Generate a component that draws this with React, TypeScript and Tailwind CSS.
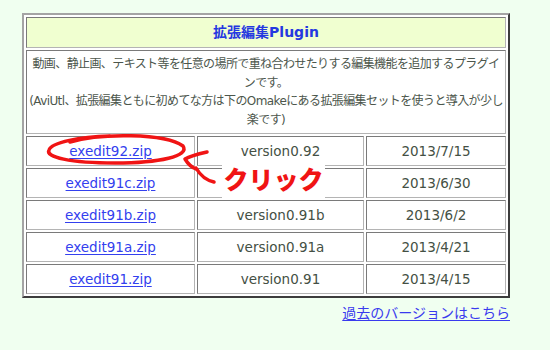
const rows = [
  { file: 'exedit92.zip', ver: 'version0.92', date: '2013/7/15' },
  { file: 'exedit91c.zip', ver: 'version0.91c', date: '2013/6/30' },
  { file: 'exedit91b.zip', ver: 'version0.91b', date: '2013/6/2' },
  { file: 'exedit91a.zip', ver: 'version0.91a', date: '2013/4/21' },
  { file: 'exedit91.zip', ver: 'version0.91', date: '2013/4/15' },
];

const cell =
  'border border-t-[#7a7a7a] border-l-[#7a7a7a] border-b-[#b4b4b4] border-r-[#b4b4b4] p-0 text-center';

export default function App() {
  return (
    <div
      className="w-[550px] h-[350px] bg-[#f0fff0] pt-[13px] pl-[22px] overflow-hidden"
      style={{ fontFamily: '"DejaVu Sans", "Noto Sans CJK JP", sans-serif' }}
    >
      <div className="relative w-[488px]">
        <table className="w-[488px] bg-white border-separate border-spacing-[2px] border-2 border-t-[#a4a4a4] border-l-[#a4a4a4] border-b-[#3c3c3c] border-r-[#3c3c3c]">
          <tbody>
            <tr>
              <td colSpan={3} className={`${cell} h-[31px] bg-[#f0ffd0] text-[14px] font-bold text-[#2438e0]`}>
                拡張編集Plugin
              </td>
            </tr>
            <tr>
              <td colSpan={3} className={`${cell} h-[84px] text-[12px] leading-[18.5px] tracking-[-0.6px] text-[#4c564c]`}>
                動画、静止画、テキスト等を任意の場所で重ね合わせたりする編集機能を追加するプラグイ
                <br />
                ンです。
                <br />
                (AviUtl、拡張編集ともに初めてな方は下のOmakeにある拡張編集セットを使うと導入が少し
                <br />
                楽です)
              </td>
            </tr>
            {rows.map((r) => (
              <tr key={r.file}>
                <td className={`${cell} w-[169px] h-[30px] text-[13.5px]`}>
                  <a href="#" className="text-[#3340ee] underline underline-offset-2">
                    {r.file}
                  </a>
                </td>
                <td className={`${cell} w-[167px] text-[13.5px] text-[#445044]`}>{r.ver}</td>
                <td className={`${cell} w-[140px] text-[13.5px] text-[#445044]`}>{r.date}</td>
              </tr>
            ))}
          </tbody>
        </table>

        {/* hand-drawn circle + arrow pointing at the newest download */}
        <svg className="absolute left-0 top-0 pointer-events-none" width="488" height="290" viewBox="22 13 488 290">
          <g fill="none" stroke="#f01414" strokeWidth="3.5" strokeLinecap="round" strokeLinejoin="round">
            <path d="M70 142 C100 133 165 133 183 146 C190 156 160 163 115 163 C70 163 45 157 49 150 C52 142 80 137 110 136" />
            <path d="M207 152 C198 154 190 156 185 159 C188 164 191 167 196 169" />
            <path d="M196 168 C200 175 205 180 214 182" />
          </g>
        </svg>
        <span className="absolute left-[200px] top-[150px] w-[103px] h-[35px] bg-white flex items-center justify-center text-[25px] leading-none font-black text-[#f01414]">
          クリック
        </span>
      </div>
      <div className="w-[488px] mt-[3px] text-right">
        <a href="#" className="text-[14px] text-[#3a3aee] underline underline-offset-2">
          過去のバージョンはこちら
        </a>
      </div>
    </div>
  );
}
